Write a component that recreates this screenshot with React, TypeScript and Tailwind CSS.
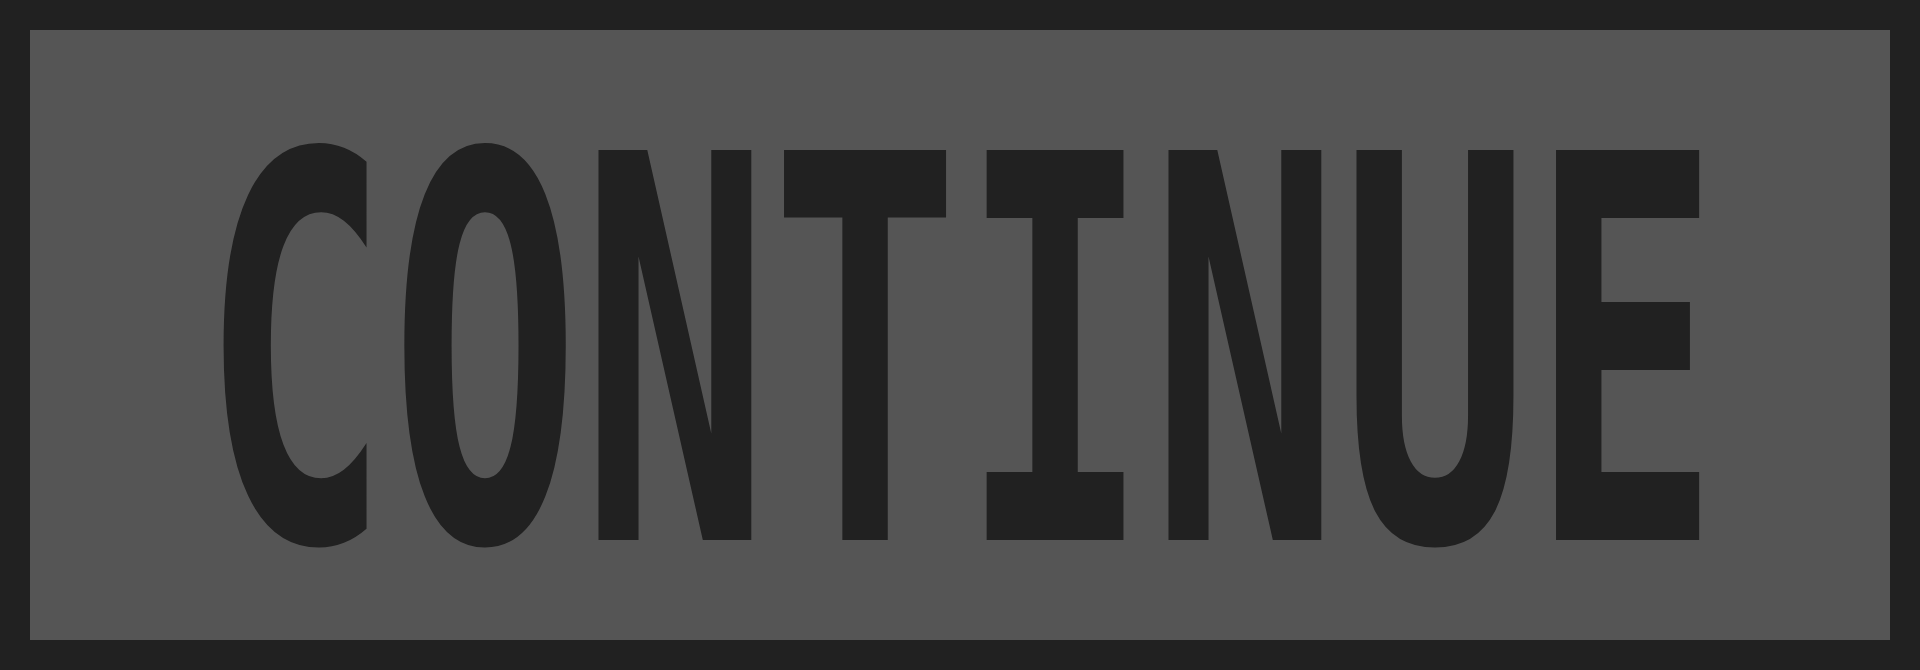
// Monospaced caps, squeezed horizontally so each glyph advance is exactly
// one 190px cell (170px letter + 20px gap) while the cap height stays 390px.
const LABEL = "CONTINUE";

export default function App() {
  return (
    <div className="h-[670px] w-full bg-[#212121] p-[30px]">
      <button
        type="button"
        className="flex h-full w-full justify-center gap-[20px] bg-[#555555] pt-[57px]"
      >
        {LABEL.split("").map((ch, i) => (
          <span
            key={i}
            className="flex h-[535px] w-[170px] justify-center overflow-visible"
          >
            <span
              className="block origin-center scale-x-[0.589] text-[535px] font-bold leading-none text-[#212121]"
              style={{ fontFamily: '"DejaVu Sans Mono", monospace' }}
            >
              {ch}
            </span>
          </span>
        ))}
      </button>
    </div>
  );
}
